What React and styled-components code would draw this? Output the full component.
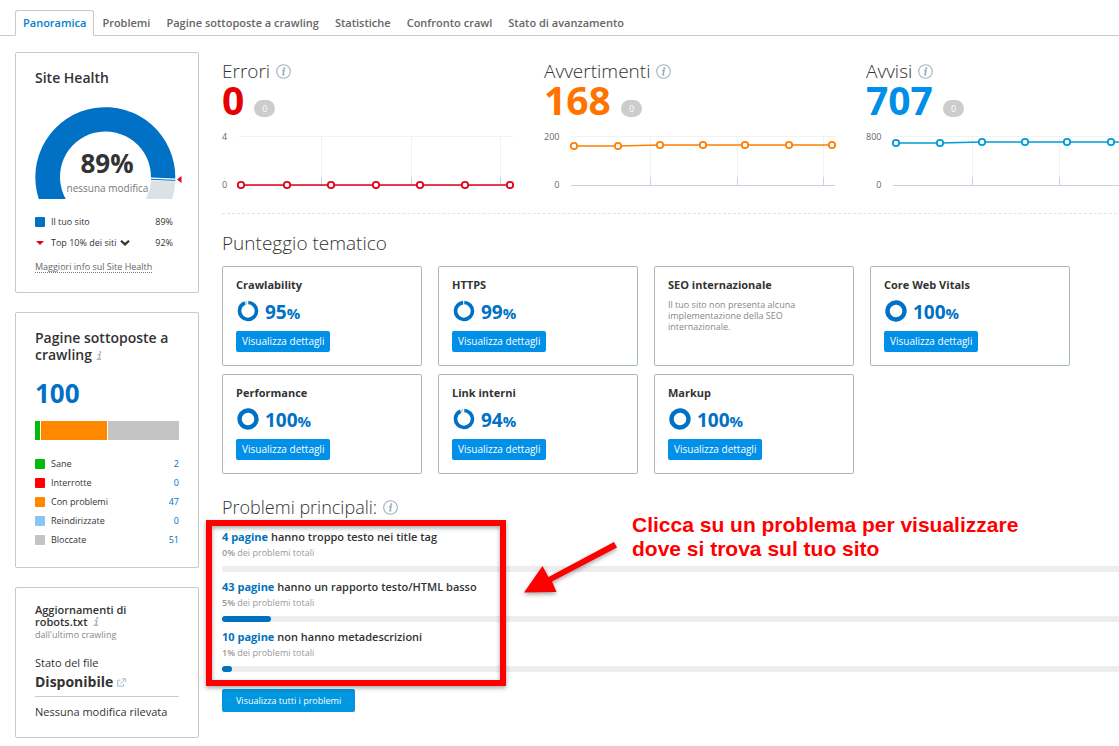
/*========== EXTERNAL MODULES ==========*/
import * as React from 'react';
import {useState} from 'react';
import styled, {createGlobalStyle} from 'styled-components';


/*========== DATA ==========*/
const TABS = ['Panoramica', 'Problemi', 'Pagine sottoposte a crawling', 'Statistiche', 'Confronto crawl', 'Stato di avanzamento'];

const CRAWLED = [
  {label: 'Sane', value: 2, color: '#00bb0b'},
  {label: 'Interrotte', value: 0, color: '#ff0000'},
  {label: 'Con problemi', value: 47, color: '#ff8800'},
  {label: 'Reindirizzate', value: 0, color: '#87c6f2'},
  {label: 'Bloccate', value: 51, color: '#c4c4c4'},
];

const STATS = [
  {
    title: 'Errori', value: 0, color: '#e60000', line: '#e3001b', max: 4, width: 284,
    grid: [87, 177, 266],
    points: [[7, 54], [53, 54], [97, 54], [142, 54], [186, 54], [231, 54], [276, 54]],
  },
  {
    title: 'Avvertimenti', value: 168, color: '#ff7300', line: '#ff7f00', max: 200, width: 274,
    grid: [84, 171, 257],
    points: [[8, 15], [52, 15], [94, 14], [137, 14], [179, 14], [223, 14], [266, 14]],
  },
  {
    title: 'Avvisi', value: 707, color: '#008fe8', line: '#009bd9', max: 800, width: 274,
    grid: [84, 171, 257],
    points: [[8, 12], [52, 12], [94, 11], [137, 11], [179, 11], [223, 11], [266, 11]],
  },
];

const THEMES = [
  {name: 'Crawlability', score: 95},
  {name: 'HTTPS', score: 99},
  {name: 'SEO internazionale', note: 'Il tuo sito non presenta alcuna implementazione della SEO internazionale.'},
  {name: 'Core Web Vitals', score: 100},
  {name: 'Performance', score: 100},
  {name: 'Link interni', score: 94},
  {name: 'Markup', score: 100},
];

const ISSUES = [
  {pages: 4, text: 'hanno troppo testo nei title tag', percent: 0},
  {pages: 43, text: 'hanno un rapporto testo/HTML basso', percent: 5},
  {pages: 10, text: 'non hanno metadescrizioni', percent: 1},
];


/*========== ICONS ==========*/
function InfoCircle() {
  return (
    <svg width='15' height='15' viewBox='0 0 15 15' aria-hidden='true'>
      <circle cx='7.5' cy='7.5' r='6.8' fill='#fff' stroke='#9fb5bc' strokeWidth='1.1' />
      <circle cx='8.3' cy='4.4' r='1.1' fill='#96adb5' />
      <path d='M6.1 6.6h1.9L7 10.8h1.3' fill='none' stroke='#96adb5' strokeWidth='1.5' />
    </svg>
  )
}

function InfoGlyph() {
  return (
    <svg width='7' height='9' viewBox='0 0 7 9' aria-hidden='true'>
      <circle cx='4.3' cy='1.1' r='1.1' fill='#a9bac0' />
      <path d='M1.6 3.6h2.3L3 8.1M.6 8.2h4.6' fill='none' stroke='#a9bac0' strokeWidth='1.5' />
    </svg>
  )
}

function ExternalIcon() {
  return (
    <svg width='9' height='9' viewBox='0 0 9 9' fill='none' stroke='#a9bcc2' aria-hidden='true'>
      <path d='M3.5 2.2H.7v6h5.6V5.6M5 .7h3.3V4M8.2.8 3.4 5.6' />
    </svg>
  )
}

function Gauge() {
  return (
    <GaugeDrawing width='144' height='92' viewBox='0 0 144 92' role='img' aria-label='Site Health 89%'>
      <path d='M140.3 71.5A70 70 0 1 0 3.8 92H30.7A45.5 45.5 0 1 1 116 70.5Z' fill='#0071c5' />
      <path d='M116 72.3 140.3 73.4' stroke='#0071c5' fill='none' />
      <path d='M116 73.5 140.3 74.5A70 70 0 0 1 137.2 92H110.6A45 45 0 0 0 116 73.5Z' fill='#dbe1e4' />
      <path d='M142 72.5 146.5 69V76Z' fill='#ee0010' />
      <GaugeValue x='72' y='66'>89%</GaugeValue>
      <GaugeNote x='72.5' y='85'>nessuna modifica</GaugeNote>
    </GaugeDrawing>
  )
}

function Ring({score}) {
  const circle = 2 * Math.PI * 8.5;
  const full = score === 100;
  const gap = full ? 0 : circle * (100 - score) / 100 + 1;
  return (
    <svg width='24' height='24' viewBox='0 0 24 24' aria-hidden='true'>
      {!full && <circle cx='12' cy='12' r='8.5' fill='none' stroke='#c9d3d8' strokeWidth='3.5' strokeDasharray={`${Math.max(gap - 2, 0)} ${circle}`} transform={`rotate(${-90 - (gap - 1) / circle * 360} 12 12)`} />}
      <circle cx='12' cy='12' r='8.5' fill='none' stroke='#0071c5' strokeWidth={full ? 4.4 : 3.7} strokeDasharray={`${circle - gap} ${gap}`} transform='rotate(-88 12 12)' />
    </svg>
  )
}

function Arrow() {
  return (
    <svg width='96' height='56' viewBox='0 0 96 56' aria-hidden='true'>
      <path d='M0 52.5 18.5 26 24.5 37 90 2 93 7.5 28 41.5 32.5 52Z' fill='#ff0000' />
    </svg>
  )
}


/*========== PARTS ==========*/
function Chart({max, width, line, grid, points}) {
  return (
    <ChartRow>
      <Axis><span>{max}</span><span>0</span></Axis>
      <svg width={width} height='60' viewBox={`0 0 ${width} 60`} aria-hidden='true'>
        <path d={`M5 5.5H${width - 5}`} stroke='#f2f2f2' />
        {grid.map(x => (
          <React.Fragment key={x}>
            <path d={`M${x}.5 5V54`} stroke='#f2f2f2' />
            <path d={`M${x}.5 46V54`} stroke='#c9d5e3' />
          </React.Fragment>
        ))}
        <path d={`M5 54.5H${width - 5}`} stroke='#c3d2df' />
        <polyline points={points.join(' ')} fill='none' stroke={line} strokeWidth='1.6' />
        {points.map(([x, y]) => <circle key={x} cx={x} cy={y} r='3.2' fill='#fff' stroke={line} strokeWidth='1.8' />)}
      </svg>
    </ChartRow>
  )
}

function Stat({title, value, color, ...chart}) {
  return (
    <section>
      <Heading>{title} <InfoCircle /></Heading>
      <Total>
        <Figure $color={color}>{value}</Figure>
        <Pill>0</Pill>
      </Total>
      <Chart {...chart} />
    </section>
  )
}

function Theme({name, score, note}) {
  return (
    <ThemeCard>
      <ThemeName>{name}</ThemeName>
      {note ? <ThemeNote>{note}</ThemeNote> : (
        <>
          <Score><Ring score={score} /><b>{score}<small>%</small></b></Score>
          <DetailButton type='button'>Visualizza dettagli</DetailButton>
        </>
      )}
    </ThemeCard>
  )
}

function Issue({pages, text, percent}) {
  return (
    <li>
      <IssueTitle><a href='#pagine'>{pages} pagine</a> {text}</IssueTitle>
      <IssueShare><b>{percent}%</b> dei problemi totali</IssueShare>
      <Track><Fill style={{width: `${percent}%`}} /></Track>
    </li>
  )
}


/*========== APP ==========*/
function App() {
  /*----- STATE HOOKS -----*/
  const [tab, setTab] = useState(TABS[0]);

  /*----- RENDERER -----*/
  return (
    <Page>
      <GlobalStyle />
      <Tabs>
        {TABS.map(name => (
          <Tab key={name} href='#tab' $active={name === tab} onClick={() => setTab(name)}>{name}</Tab>
        ))}
      </Tabs>
      <Columns>
        <Sidebar>
          <Card>
            <CardTitle>Site Health</CardTitle>
            <GaugeBox><Gauge /></GaugeBox>
            <HealthRow><Square $color='#0071c5' /><span>Il tuo sito</span><Value>89%</Value></HealthRow>
            <HealthRow>
              <svg width='10' height='10' viewBox='0 0 10 10' aria-hidden='true'><path d='M1 3H9L5 7Z' fill='#e6000c' /></svg>
              <Picker type='button'>
                Top 10% dei siti
                <svg width='10' height='8' viewBox='0 0 10 8' aria-hidden='true'><path d='M1 1.8 5 5.4 9 1.8' fill='none' stroke='#333' strokeWidth='2.2' /></svg>
              </Picker>
              <Value>92%</Value>
            </HealthRow>
            <MoreLink href='#info'>Maggiori info sul Site Health</MoreLink>
          </Card>

          <Card>
            <CardTitle>Pagine sottoposte a crawling <InfoGlyph /></CardTitle>
            <Crawled>100</Crawled>
            <Stack>
              <Segment $grow={5} $color='#00bb0b' />
              <Segment $grow={66} $color='#ff8800' />
              <Segment $grow={71} $color='#c4c4c4' />
            </Stack>
            <Legend>
              {CRAWLED.map(({label, value, color}) => (
                <li key={label}><Square $color={color} /><span>{label}</span><a href='#pagine'>{value}</a></li>
              ))}
            </Legend>
          </Card>

          <Card>
            <SmallTitle>Aggiornamenti di robots.txt &nbsp;<InfoGlyph /></SmallTitle>
            <Since>dall'ultimo crawling</Since>
            <FileLabel>Stato del file</FileLabel>
            <FileState>Disponibile <ExternalIcon /></FileState>
            <FileChange>Nessuna modifica rilevata</FileChange>
          </Card>
        </Sidebar>

        <Main>
          <Stats>{STATS.map(stat => <Stat key={stat.title} {...stat} />)}</Stats>

          <ThemeHeading>Punteggio tematico</ThemeHeading>
          <Themes>{THEMES.map(theme => <Theme key={theme.name} {...theme} />)}</Themes>

          <IssueHeading>Problemi principali: <InfoCircle /></IssueHeading>
          <IssueArea>
            <Issues>{ISSUES.map(issue => <Issue key={issue.pages} {...issue} />)}</Issues>
            <Frame />
            <Pointer><Arrow /></Pointer>
            <Callout>Clicca su un problema per visualizzare<br />dove si trova sul tuo sito</Callout>
          </IssueArea>
          <AllButton type='button'>Visualizza tutti i problemi</AllButton>
        </Main>
      </Columns>
    </Page>
  )
}


/*========== EXPORTS ==========*/
export default App;


/*========== STYLES ==========*/
const GlobalStyle = createGlobalStyle`
  * {
    box-sizing: border-box;
  }
  body {
    margin: 0;
    background: #fff;
    color: #333;
    font-family: 'Open Sans', 'Noto Sans', sans-serif;
    font-size: 10px;
  }
  h2, h3, p, ul {
    margin: 0;
    padding: 0;
    list-style: none;
  }
  a {
    color: #0071bc;
    text-decoration: none;
  }
  button {
    font-family: inherit;
    cursor: pointer;
  }
  svg {
    flex: none;
  }
`;

const Page = styled.div`
  overflow-x: hidden;
`;

const Tabs = styled.nav`
  display: flex;
  padding: 10px 15px 0;
  border-bottom: 1px solid #c9c9c9;
`;

const Tab = styled.a`
  margin-bottom: -1px;
  padding: 0 7px;
  border: 1px solid ${({$active}) => $active ? '#c9c9c9' : 'transparent'};
  border-bottom-color: ${({$active}) => $active ? '#fff' : 'transparent'};
  border-radius: 3px 3px 0 0;
  color: ${({$active}) => $active ? '#0080d0' : '#666'};
  font-size: 11px;
  font-weight: 600;
  line-height: 24px;
  white-space: nowrap;
`;

const Columns = styled.div`
  display: flex;
  align-items: flex-start;
  gap: 23px;
  padding: 16px 0 8px 15px;
`;

const Sidebar = styled.aside`
  display: flex;
  flex: 0 0 184px;
  flex-direction: column;
  gap: 19px;
`;

const Card = styled.section`
  padding: 16px 19px 16px;
  border: 1px solid #c9c9c9;
  border-radius: 2px;
`;

const CardTitle = styled.h2`
  font-size: 14px;
  font-weight: 600;
  line-height: 17px;
`;

const GaugeBox = styled.div`
  margin: 21px 0 12px;
  height: 92px;
`;

const GaugeDrawing = styled.svg`
  overflow: visible;
`;

const GaugeValue = styled.text`
  fill: #333;
  font-size: 26px;
  font-weight: 700;
  text-anchor: middle;
`;

const GaugeNote = styled.text`
  fill: #777;
  font-size: 10px;
  text-anchor: middle;
`;

const HealthRow = styled.div`
  display: flex;
  align-items: center;
  gap: 6px;
  padding-right: 6px;
  font-size: 9px;
  line-height: 21px;
`;

const Square = styled.i`
  width: 10px;
  height: 10px;
  border-radius: 1px;
  background: ${({$color}) => $color};
`;

const Value = styled.span`
  margin-left: auto;
`;

const Picker = styled.button`
  display: flex;
  align-items: center;
  gap: 3px;
  padding: 0;
  border: 0;
  background: none;
  color: inherit;
  font-size: 9px;
  line-height: 21px;
`;

const MoreLink = styled.a`
  display: inline-block;
  margin: 8px 0 3px;
  border-bottom: 1px dotted #777;
  color: #666;
  font-size: 9px;
  line-height: 11px;
`;

const Crawled = styled.p`
  margin: 15px 0 13px;
  color: #0071c5;
  font-size: 26px;
  font-weight: 700;
  line-height: 30px;
`;

const Stack = styled.div`
  display: flex;
  gap: 1px;
  height: 19px;
`;

const Segment = styled.span`
  flex: ${({$grow}) => $grow} 1 0;
  background: ${({$color}) => $color};
`;

const Legend = styled.ul`
  margin: 14px 0 2px;
  font-size: 9px;
  line-height: 19px;

  li {
    display: flex;
    align-items: center;
    gap: 6px;
  }
  a {
    margin-left: auto;
  }
`;

const SmallTitle = styled.h2`
  font-size: 11px;
  font-weight: 600;
  line-height: 12px;
`;

const Since = styled.p`
  color: #888;
  font-size: 9px;
  line-height: 14px;
`;

const FileLabel = styled.p`
  margin-top: 12px;
  font-size: 11px;
  line-height: 18px;
`;

const FileState = styled.p`
  padding-bottom: 4px;
  border-bottom: 1px solid #c9c9c9;
  font-size: 14px;
  font-weight: 700;
  line-height: 20px;
`;

const FileChange = styled.p`
  padding-top: 6px;
  font-size: 11px;
  line-height: 18px;
`;

/* wider than narrow windows, the page clips what does not fit */
const Main = styled.main`
  flex: 1 0 980px;
`;

const Stats = styled.div`
  display: grid;
  grid-template-columns: repeat(3, 322px);
  padding: 7px 0 22px;
  border-bottom: 1px dashed #e3e3e3;
`;

const Heading = styled.h2`
  display: flex;
  align-items: center;
  gap: 6px;
  font-size: 19px;
  font-weight: 300;
  line-height: 24px;
`;

const Total = styled.div`
  display: flex;
  align-items: flex-end;
  gap: 10px;
  height: 34px;
`;

const Figure = styled.strong`
  color: ${({$color}) => $color};
  font-size: 39px;
  font-weight: 700;
  line-height: 34px;
`;

const Pill = styled.span`
  padding: 0 8px;
  border-radius: 9px;
  background: #ccc;
  color: #fff;
  font-size: 9px;
  line-height: 17px;
`;

const ChartRow = styled.div`
  display: flex;
  gap: 7px;
  margin-top: 14px;
`;

const Axis = styled.div`
  display: flex;
  flex-direction: column;
  justify-content: space-between;
  height: 60px;
  color: #666;
  font-size: 9px;
  line-height: 12px;
  text-align: right;
`;

const ThemeHeading = styled(Heading)`
  margin: 17px 0 11px;
`;

const Themes = styled.div`
  display: grid;
  grid-template-columns: repeat(auto-fill, 200px);
  grid-auto-rows: 100px;
  gap: 8px 16px;
`;

const ThemeCard = styled.section`
  padding: 10px 13px;
  border: 1px solid #a9b8bf;
  border-radius: 2px;
`;

const ThemeName = styled.h3`
  font-size: 11px;
  font-weight: 700;
  line-height: 16px;
`;

const ThemeNote = styled.p`
  margin-top: 6px;
  max-width: 144px;
  color: #888;
  font-size: 9px;
  line-height: 11px;
`;

const Score = styled.div`
  display: flex;
  align-items: center;
  gap: 5px;
  margin: 5px 0 8px;
  color: #0071c5;
  font-size: 19px;
  line-height: 20px;

  b {
    padding-top: 4px;
  }
  small {
    font-size: 15px;
  }
`;

const DetailButton = styled.button`
  display: block;
  padding: 0 6px;
  border: 0;
  border-radius: 2px;
  background: #0090e8;
  color: #fff;
  font-size: 10px;
  line-height: 21px;
`;

const IssueHeading = styled(Heading)`
  margin: 21px 0 0;
  font-size: 18px;
`;

const IssueArea = styled.div`
  position: relative;
  padding-top: 10px;
`;

const Issues = styled.ul`
  li {
    padding-bottom: 7px;
  }
`;

const IssueTitle = styled.h3`
  font-size: 11px;
  font-weight: 600;
  line-height: 16px;

  a {
    font-weight: 700;
  }
`;

const IssueShare = styled.p`
  margin: 2px 0 7px;
  color: #999;
  font-size: 9px;
  line-height: 12px;

  b {
    font-weight: 600;
  }
`;

const Track = styled.div`
  height: 6px;
  border-radius: 3px;
  background: #ededed;
`;

const Fill = styled.div`
  height: 6px;
  border-radius: 3px;
  background: #0071bc;
`;

const Frame = styled.div`
  position: absolute;
  top: 1px;
  left: -16px;
  width: 300px;
  height: 166px;
  border: 6px solid #ff0000;
  filter: drop-shadow(0 2px 2px rgba(0, 0, 0, 0.35));
  pointer-events: none;
`;

const Pointer = styled.div`
  position: absolute;
  top: 21px;
  left: 302px;
  filter: drop-shadow(0 2px 2px rgba(0, 0, 0, 0.35));
  pointer-events: none;
`;

const Callout = styled.p`
  position: absolute;
  top: -6px;
  left: 410px;
  color: #ff0000;
  font-family: 'Liberation Sans', Arial, sans-serif;
  font-size: 21px;
  font-weight: 700;
  line-height: 24px;
  white-space: nowrap;
`;

const AllButton = styled.button`
  display: block;
  margin-top: 10px;
  padding: 0 14px;
  border: 0;
  border-radius: 2px;
  background: #0096e0;
  color: #fff;
  font-size: 9px;
  line-height: 23px;
`;
